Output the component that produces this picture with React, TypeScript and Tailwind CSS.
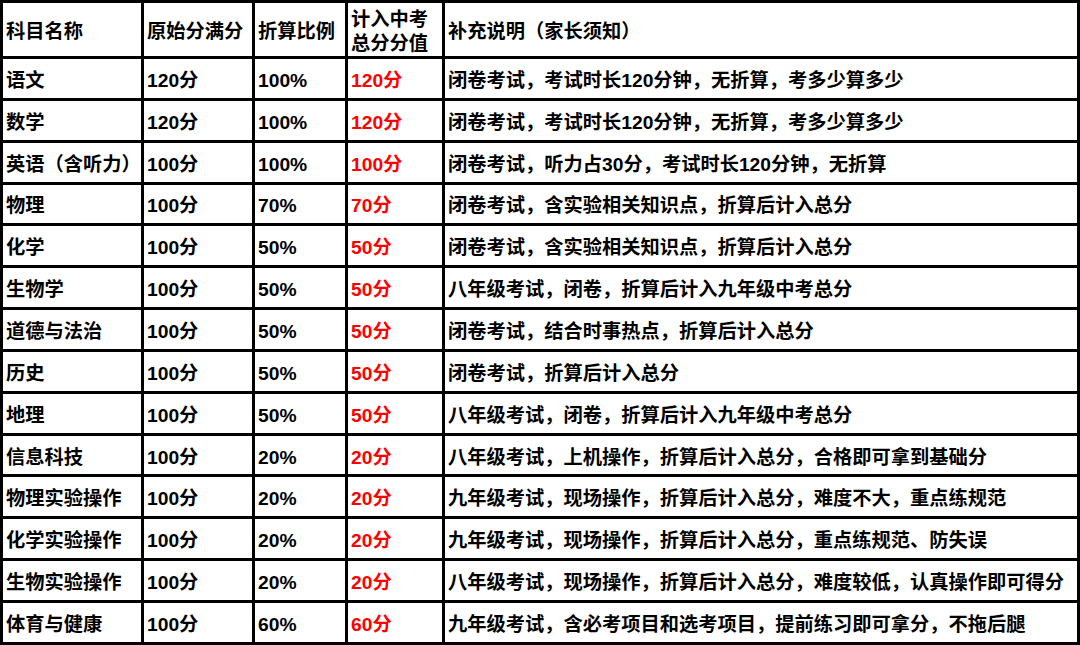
const rows: [string, string, string, string, string][] = [
  ["语文", "120分", "100%", "120分", "闭卷考试，考试时长120分钟，无折算，考多少算多少"],
  ["数学", "120分", "100%", "120分", "闭卷考试，考试时长120分钟，无折算，考多少算多少"],
  ["英语（含听力）", "100分", "100%", "100分", "闭卷考试，听力占30分，考试时长120分钟，无折算"],
  ["物理", "100分", "70%", "70分", "闭卷考试，含实验相关知识点，折算后计入总分"],
  ["化学", "100分", "50%", "50分", "闭卷考试，含实验相关知识点，折算后计入总分"],
  ["生物学", "100分", "50%", "50分", "八年级考试，闭卷，折算后计入九年级中考总分"],
  ["道德与法治", "100分", "50%", "50分", "闭卷考试，结合时事热点，折算后计入总分"],
  ["历史", "100分", "50%", "50分", "闭卷考试，折算后计入总分"],
  ["地理", "100分", "50%", "50分", "八年级考试，闭卷，折算后计入九年级中考总分"],
  ["信息科技", "100分", "20%", "20分", "八年级考试，上机操作，折算后计入总分，合格即可拿到基础分"],
  ["物理实验操作", "100分", "20%", "20分", "九年级考试，现场操作，折算后计入总分，难度不大，重点练规范"],
  ["化学实验操作", "100分", "20%", "20分", "九年级考试，现场操作，折算后计入总分，重点练规范、防失误"],
  ["生物实验操作", "100分", "20%", "20分", "八年级考试，现场操作，折算后计入总分，难度较低，认真操作即可得分"],
  ["体育与健康", "100分", "60%", "60分", "九年级考试，含必考项目和选考项目，提前练习即可拿分，不拖后腿"],
];

const cell = "border-[3px] border-black pl-[3px] pt-[5px] align-middle whitespace-nowrap";

export default function App() {
  return (
    <div className="w-[1080px] h-[645px] overflow-hidden bg-white">
      <table
        className="w-[1080px] table-fixed border-collapse text-[19.25px] font-bold text-black leading-[24px]"
        style={{ fontFamily: '"Liberation Sans", "Noto Sans CJK SC", sans-serif' }}
      >
        <colgroup>
          <col className="w-[141px]" />
          <col className="w-[111px]" />
          <col className="w-[93px]" />
          <col className="w-[97px]" />
          <col className="w-[635px]" />
        </colgroup>
        <thead>
          <tr className="h-[56px]">
            <th className={`${cell} text-left font-bold`}>科目名称</th>
            <th className={`${cell} text-left font-bold`}>原始分满分</th>
            <th className={`${cell} text-left font-bold`}>折算比例</th>
            <th className={`${cell} text-left font-bold`}>
              计入中考
              <br />
              总分分值
            </th>
            <th className={`${cell} text-left font-bold`}>补充说明（家长须知）</th>
          </tr>
        </thead>
        <tbody>
          {rows.map((r) => (
            <tr key={r[0]} className="h-[41.85px]">
              <td className={cell}>{r[0]}</td>
              <td className={cell}>{r[1]}</td>
              <td className={cell}>{r[2]}</td>
              <td className={`${cell} text-[#ff0000]`}>{r[3]}</td>
              <td className={cell}>{r[4]}</td>
            </tr>
          ))}
        </tbody>
      </table>
    </div>
  );
}
